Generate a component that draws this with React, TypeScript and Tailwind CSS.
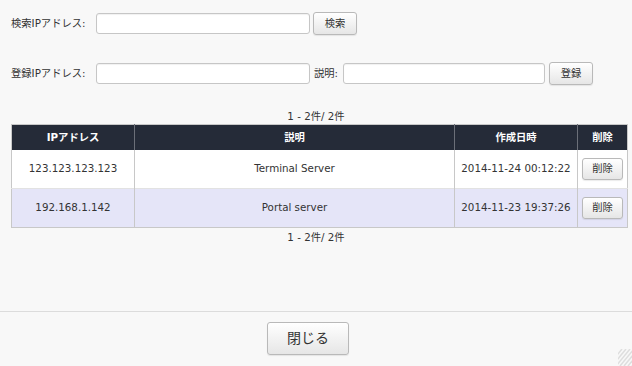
import React from "react";

const rows = [
  { ip: "123.123.123.123", desc: "Terminal Server", date: "2014-11-24 00:12:22" },
  { ip: "192.168.1.142", desc: "Portal server", date: "2014-11-23 19:37:26" },
];

const font = "font-['DejaVu_Sans','Noto_Sans_CJK_JP',sans-serif]";
const btn =
  "border border-[#b9b9b9] rounded-[3px] bg-gradient-to-b from-[#ffffff] to-[#e6e6e6] text-[#333] shadow-[0_1px_1px_rgba(0,0,0,0.08)]";
const input =
  "h-[21px] bg-white border border-[#c6c6c6] rounded-[3px] shadow-[inset_0_1px_1px_rgba(0,0,0,0.06)]";

export default function App() {
  return (
    <div className={`${font} relative flex h-[366px] w-[632px] flex-col bg-[#f8f8f8] text-[10.3px] text-[#333]`}>
      <div className="flex-1 px-[11px] pt-[12px]">
        {/* search */}
        <div className="flex h-[23px] items-center">
          <span className="w-[85px]">検索IPアドレス:</span>
          <div className={`${input} w-[214px]`} />
          <button className={`${btn} ml-[3px] h-[23px] w-[44px]`}>検索</button>
        </div>

        {/* register */}
        <div className="mt-[27px] flex h-[23px] items-center">
          <span className="w-[85px]">登録IPアドレス:</span>
          <div className={`${input} w-[214px]`} />
          <span className="ml-[4px] w-[29px]">説明:</span>
          <div className={`${input} w-[202px]`} />
          <button className={`${btn} ml-[4px] h-[23px] w-[44px]`}>登録</button>
        </div>

        <div className="mt-[23px] h-[16px] text-center leading-[16px]">1 - 2件/ 2件</div>

        <table className="w-[617px] border-collapse border border-[#c8c8c8]">
          <thead>
            <tr className="h-[25px] bg-[#252b38] font-bold text-white">
              <th className="w-[123px] border-r border-[#6b6f78] font-bold">IPアドレス</th>
              <th className="w-[320px] border-r border-[#6b6f78] font-bold">説明</th>
              <th className="w-[123px] border-r border-[#6b6f78] font-bold">作成日時</th>
              <th className="font-bold">削除</th>
            </tr>
          </thead>
          <tbody>
            {rows.map((r, i) => (
              <tr
                key={r.ip}
                className={`h-[39px] ${i % 2 === 0 ? "bg-white" : "bg-[#e5e5f8]"} ${i === 0 ? "border-b border-[#e2e2e2]" : ""}`}
              >
                <td className="border-r border-[#c8c8c8] text-center">{r.ip}</td>
                <td className="border-r border-[#c8c8c8] text-center">{r.desc}</td>
                <td className="border-r border-[#c8c8c8] text-center">{r.date}</td>
                <td className="text-center">
                  <button className={`${btn} h-[22px] w-[41px]`}>削除</button>
                </td>
              </tr>
            ))}
          </tbody>
        </table>

        <div className="h-[18px] text-center leading-[18px]">1 - 2件/ 2件</div>
      </div>

      <div className="flex h-[55px] items-start justify-center border-t border-[#dcdcdc] pr-[16px] pt-[10px]">
        <button className={`${btn} h-[33px] w-[82px] text-[14px]`}>閉じる</button>
      </div>

      {/* resize grip */}
      <svg className="absolute bottom-0 right-0" width="14" height="17" viewBox="0 0 14 17">
        {[0, 4, 8, 12, 16, 20, 24].map((o) => (
          <line key={o} x1={o - 10} y1="17" x2={o + 4} y2="0" stroke="#dedede" strokeWidth="1.5" />
        ))}
      </svg>
    </div>
  );
}
